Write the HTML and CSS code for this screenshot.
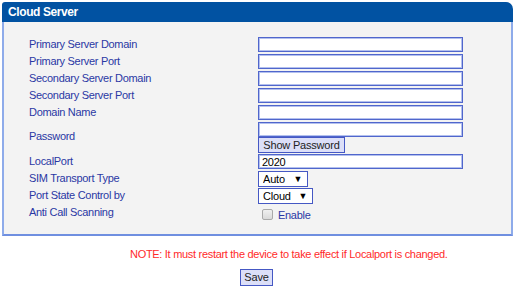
FILE: index.html
```html
<!DOCTYPE html>
<html>
<head>
<meta charset="utf-8">
<link rel="stylesheet" href="styles.css">
</head>
<body>
<div class="panel">
  <div class="head">Cloud Server</div>
  <div class="body">
    <div class="row"><span class="lbl">Primary Server Domain</span><span class="ctl"><input class="txt" type="text"></span></div>
    <div class="row"><span class="lbl">Primary Server Port</span><span class="ctl"><input class="txt" type="text"></span></div>
    <div class="row"><span class="lbl">Secondary Server Domain</span><span class="ctl"><input class="txt" type="text"></span></div>
    <div class="row"><span class="lbl">Secondary Server Port</span><span class="ctl"><input class="txt" type="text"></span></div>
    <div class="row"><span class="lbl">Domain Name</span><span class="ctl"><input class="txt" type="text"></span></div>
    <div class="row pw"><span class="lbl">Password</span><span class="ctl col"><input class="txt" type="password"><button class="btn showpw" type="button">Show Password</button></span></div>
    <div class="row"><span class="lbl">LocalPort</span><span class="ctl"><input class="txt" type="text" value="2020"></span></div>
    <div class="row"><span class="lbl">SIM Transport Type</span><span class="ctl"><span class="sel w50"><select><option>Auto</option></select></span></span></div>
    <div class="row"><span class="lbl">Port State Control by</span><span class="ctl"><span class="sel w55"><select><option>Cloud</option></select></span></span></div>
    <div class="row anti"><span class="lbl">Anti Call Scanning</span><span class="ctl"><label class="chk"><input type="checkbox"><span>Enable</span></label></span></div>
  </div>
</div>
<div class="note">NOTE: It must restart the device to take effect if Localport is changed.</div>
<div class="actions"><button class="btn save" type="button">Save</button></div>
</body>
</html>
```
FILE: styles.css
```css
* { box-sizing: border-box; }
body {
  margin: 0;
  background: #fff;
  font-family: "Liberation Sans", Arial, sans-serif;
  font-size: 11px;
  letter-spacing: -0.3px;
}
.panel {
  margin: 2px 2px 0 2px;
  width: 511px;
}
.head {
  height: 20px;
  background: #0152a2;
  color: #fff;
  font-weight: bold;
  font-size: 12px;
  letter-spacing: -0.4px;
  line-height: 20px;
  padding-left: 6px;
  border-radius: 3px 7px 0 0;
}
.body {
  background: #f3f3f3;
  border-left: 2px solid #8eabea;
  border-right: 2px solid #8eabea;
  border-bottom: 2px solid #6f8fe0;
  padding: 14px 0 12px 0;
}
.row {
  display: flex;
  align-items: center;
  height: 17px;
}
.lbl {
  width: 254px;
  padding-left: 25px;
  color: #2a38a4;
  position: relative;
  top: -1px;
}
.ctl { display: flex; align-items: center; height: 15px; }
.col { flex-direction: column; align-items: flex-start; }
.row.pw { height: 32px; }
.row.pw .ctl { height: 31px; }
.row.anti { height: 18px; }
.txt {
  width: 205px;
  height: 15px;
  margin: 0;
  padding: 0 3px;
  border: 1px solid #5066cc;
  box-shadow: inset 0 0 0 1px #b3c0ee;
  background: #fff;
  font-family: "Liberation Sans", Arial, sans-serif;
  font-size: 11px;
  letter-spacing: -0.3px;
  color: #000;
  outline: none;
}
.btn {
  background: #dcdff8;
  border: 1px solid #4558c4;
  font-family: "Liberation Sans", Arial, sans-serif;
  font-size: 11px;
  letter-spacing: -0.2px;
  color: #222;
  padding: 0;
  white-space: nowrap;
  cursor: pointer;
}
.showpw {
  width: 87px;
  height: 16px;
  line-height: 14px;
}
.sel {
  position: relative;
  display: inline-block;
  height: 16px;
}
.sel select {
  appearance: none;
  -webkit-appearance: none;
  width: 100%;
  height: 16px;
  border: 1px solid #4558c4;
  background: #fff;
  font-family: "Liberation Sans", Arial, sans-serif;
  font-size: 11px;
  letter-spacing: -0.2px;
  color: #000;
  padding: 0 0 0 4px;
  border-radius: 0;
  outline: none;
}
.sel::after {
  content: "\25BC";
  position: absolute;
  right: 6px;
  top: 3px;
  font-size: 9px;
  color: #000;
  pointer-events: none;
}
.w50 { width: 50px; }
.w55 { width: 55px; }
.chk {
  display: flex;
  align-items: center;
  color: #2a38a4;
  margin-top: 2px;
}
.chk input {
  appearance: none;
  -webkit-appearance: none;
  width: 11px;
  height: 11px;
  margin: 0 5px 0 4px;
  border: 1px solid #a9a9a9;
  border-radius: 2px;
  background: linear-gradient(#f0f0f0, #d9d9d9);
}
.chk span { position: relative; top: 1px; }
.note {
  margin-top: 11px;
  padding-left: 130px;
  color: #ff2a2a;
  line-height: 14px;
}
.actions {
  margin-top: 8px;
  padding-left: 240px;
}
.save {
  width: 33px;
  height: 17px;
  line-height: 15px;
}
```
